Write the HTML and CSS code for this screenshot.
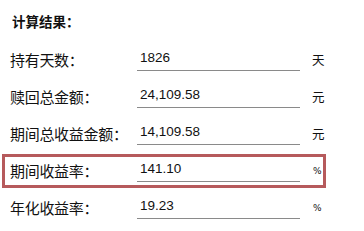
FILE: index.html
```html
<!DOCTYPE html>
<html lang="zh-CN">
<head>
    <meta charset="UTF-8">
    <meta name="viewport" content="width=device-width, initial-scale=1.0">
    <title>计算结果</title>
    <link rel="stylesheet" href="styles.css">
</head>
<body>
    <div class="calc">
        <!-- 标题 -->
        <div class="title">计算结果：</div>
        <!-- 结果列表 -->
        <div class="row">
            <span class="label">持有天数：</span>
            <span class="field">1826</span>
            <span class="unit">天</span>
        </div>
        <div class="row">
            <span class="label">赎回总金额：</span>
            <span class="field">24,109.58</span>
            <span class="unit">元</span>
        </div>
        <div class="row">
            <span class="label">期间总收益金额：</span>
            <span class="field">14,109.58</span>
            <span class="unit">元</span>
        </div>
        <div class="row mark">
            <span class="label">期间收益率：</span>
            <span class="field">141.10</span>
            <span class="unit pct">%</span>
        </div>
        <div class="row">
            <span class="label">年化收益率：</span>
            <span class="field">19.23</span>
            <span class="unit pct">%</span>
        </div>
    </div>
</body>
</html>
```

FILE: styles.css
```css
:root{
    --text-color: #111111;
    --line-color: #8a8a8a;
    --mark-color: #b65a5c;
}
body {
    margin: 0;
    background-color: #ffffff;
    color: var(--text-color);
    font-family: "Noto Sans CJK SC", "Noto Sans", sans-serif;
}
.calc{
    padding-left: 10px;
}
.title{
    height: 41px;
    line-height: 42px;
    padding-left: 2px;
    font-size: 13.5px;
    font-weight: bold;
}
.row{
    position: relative;
    display: flex;
    align-items: center;
    height: 37px;
}
.label{
    width: 127px;
    font-size: 15px;
    letter-spacing: -0.3px;
}
.field{
    box-sizing: border-box;
    width: 163px;
    height: 22px;
    line-height: 18px;
    padding-left: 3px;
    border-bottom: 1px solid var(--line-color);
    font-family: "Liberation Sans", Arial, sans-serif;
    font-size: 13.5px;
}
.unit{
    margin-left: 12px;
    font-size: 12.5px;
}
.pct{
    font-family: "DejaVu Sans", sans-serif;
    font-size: 9px;
    margin-left: 13px;
}
.mark::after{
    content: "";
    position: absolute;
    left: -8px;
    top: 2px;
    width: 324px;
    height: 34px;
    box-sizing: border-box;
    border: 3px solid var(--mark-color);
}
```
